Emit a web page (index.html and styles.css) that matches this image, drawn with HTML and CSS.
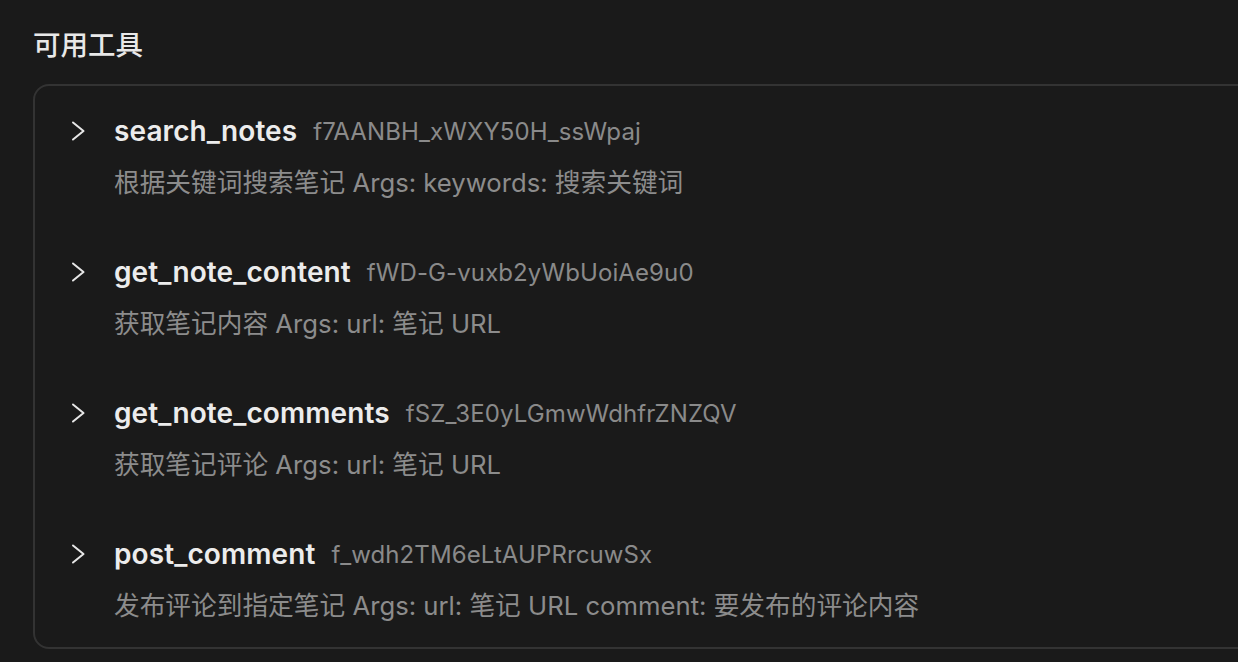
FILE: index.html
```html
<!DOCTYPE html>
<html lang="zh">
<head>
<meta charset="utf-8">
<link rel="stylesheet" href="styles.css">
</head>
<body>
<div class="page">
  <h2 class="title">可用工具</h2>
  <div class="card">
    <div class="tool">
      <div class="head">
        <svg class="chev" width="16" height="22" viewBox="0 0 16 22"><polyline points="3,2.5 13.5,11 3,19.5" fill="none" stroke="#e6e6e6" stroke-width="2" stroke-linecap="round" stroke-linejoin="round"/></svg>
        <span class="name">search_notes</span>
        <span class="id">f7AANBH_xWXY50H_ssWpaj</span>
      </div>
      <div class="desc">根据关键词搜索笔记 Args: keywords: 搜索关键词</div>
    </div>
    <div class="tool">
      <div class="head">
        <svg class="chev" width="16" height="22" viewBox="0 0 16 22"><polyline points="3,2.5 13.5,11 3,19.5" fill="none" stroke="#e6e6e6" stroke-width="2" stroke-linecap="round" stroke-linejoin="round"/></svg>
        <span class="name">get_note_content</span>
        <span class="id">fWD-G-vuxb2yWbUoiAe9u0</span>
      </div>
      <div class="desc">获取笔记内容 Args: url: 笔记 URL</div>
    </div>
    <div class="tool">
      <div class="head">
        <svg class="chev" width="16" height="22" viewBox="0 0 16 22"><polyline points="3,2.5 13.5,11 3,19.5" fill="none" stroke="#e6e6e6" stroke-width="2" stroke-linecap="round" stroke-linejoin="round"/></svg>
        <span class="name">get_note_comments</span>
        <span class="id">fSZ_3E0yLGmwWdhfrZNZQV</span>
      </div>
      <div class="desc">获取笔记评论 Args: url: 笔记 URL</div>
    </div>
    <div class="tool">
      <div class="head">
        <svg class="chev" width="16" height="22" viewBox="0 0 16 22"><polyline points="3,2.5 13.5,11 3,19.5" fill="none" stroke="#e6e6e6" stroke-width="2" stroke-linecap="round" stroke-linejoin="round"/></svg>
        <span class="name">post_comment</span>
        <span class="id">f_wdh2TM6eLtAUPRrcuwSx</span>
      </div>
      <div class="desc">发布评论到指定笔记 Args: url: 笔记 URL comment: 要发布的评论内容</div>
    </div>
  </div>
</div>
</body>
</html>
```
FILE: styles.css
```css
html, body {
  margin: 0;
  padding: 0;
  background: #1a1a1a;
  overflow: hidden;
}
body {
  font-family: Inter, "Noto Sans CJK SC", sans-serif;
  color: #e6e6e6;
}
.page {
  padding: 27px 0 0 33px;
  width: 1300px;
}
.title {
  margin: 0 0 21px 0;
  font-size: 27.5px;
  line-height: 36px;
  font-weight: 500;
  color: #e8e8e8;
}
.card {
  border: 2px solid #333333;
  border-radius: 16px;
  padding: 28px 0 24px 35px;
  display: flex;
  flex-direction: column;
  gap: 55px;
}
.tool {
  display: flex;
  flex-direction: column;
  gap: 18px;
}
.head {
  display: flex;
  align-items: center;
  height: 34px;
}
.chev {
  margin-right: 28px;
  flex: none;
}
.name {
  font-size: 28px;
  font-weight: 600;
  color: #ececec;
  margin-right: 16px;
  letter-spacing: 0.1px;
}
.id {
  font-size: 24px;
  color: #8a8a8a;
  letter-spacing: 0.1px;
}
.desc {
  margin-left: 44px;
  font-size: 25.7px;
  line-height: 34px;
  color: #8c8c8c;
}
```
